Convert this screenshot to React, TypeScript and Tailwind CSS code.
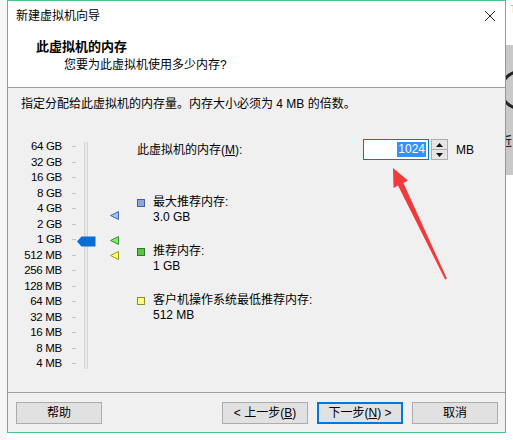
import React from "react";

const labels = [
  "64 GB", "32 GB", "16 GB", "8 GB", "4 GB", "2 GB", "1 GB", "512 MB",
  "256 MB", "128 MB", "64 MB", "32 MB", "16 MB", "8 MB", "4 MB",
];

function Tri({ fill, stroke }: { fill: string; stroke: string }) {
  return (
    <svg width="9" height="9" viewBox="0 0 9 9">
      <path d="M0.5 4.5 L8.5 0.5 L8.5 8.5 Z" fill={fill} stroke={stroke} strokeWidth="1" />
    </svg>
  );
}

function Legend({ color, border, title, value }: { color: string; border: string; title: string; value: string }) {
  return (
    <div className="flex">
      <div className="w-[16px] pt-[4px]">
        <div className="h-[8px] w-[8px] border" style={{ background: color, borderColor: border }} />
      </div>
      <div className="leading-[15px]">
        <div>{title}</div>
        <div>{value}</div>
      </div>
    </div>
  );
}

function Btn({ children, primary }: { children: React.ReactNode; primary?: boolean }) {
  return (
    <button
      className={
        "flex h-[22px] w-[86px] items-center justify-center bg-[#e1e1e1] text-[12px] " +
        (primary ? "border-2 border-[#0078d7]" : "border border-[#adadad]")
      }
    >
      {children}
    </button>
  );
}

export default function App() {
  return (
    <div className="relative flex h-[440px] w-[513px] overflow-hidden bg-white font-['Liberation_Sans','Noto_Sans_CJK_SC',sans-serif] text-[12px] text-black">
      <div className="w-[7px] bg-[#f7f7f7]" />

      {/* Dialog window */}
      <div className="flex h-[433px] w-[499px] flex-col border border-[#4cc08e] bg-white">
        {/* Title bar + header */}
        <div className="h-[86px] bg-white">
          <div className="flex h-[29px] items-center justify-between pl-[8px] pr-[9px]">
            <span className="text-[12px]">新建虚拟机向导</span>
            <svg width="12" height="12" viewBox="0 0 12 12" className="mt-[1px]">
              <path d="M1 1 L11 11 M11 1 L1 11" stroke="#222" strokeWidth="1" />
            </svg>
          </div>
          <div className="pl-[28px] pt-[8px] leading-[18px]">
            <div className="text-[13px] font-bold">此虚拟机的内存</div>
            <div className="pl-[28px] text-[12px]">您要为此虚拟机使用多少内存?</div>
          </div>
        </div>
        <div className="h-px bg-[#a0a0a0]" />

        {/* Body */}
        <div className="flex-1 bg-[#f0f0f0]">
          <div className="pl-[13px] pt-[8px] leading-[16px]">
            指定分配给此虚拟机的内存量。内存大小必须为 4 MB 的倍数。
          </div>

          <div className="relative mt-[27px] flex">
            {/* Slider labels */}
            <div className="w-[54px] text-right text-[11.5px] tracking-[-0.3px]">
              {labels.map((l) => (
                <div key={l} className="flex h-[15.5px] items-center justify-end">
                  {l}
                </div>
              ))}
            </div>
            {/* Ticks */}
            <div className="ml-[10px] w-[4px]">
              {labels.map((l) => (
                <div key={l} className="flex h-[15.5px] items-center">
                  <div className="h-px w-[4px] bg-[#c4c4c4]" />
                </div>
              ))}
            </div>
            {/* Track */}
            <div className="ml-[8px] mt-[3px] flex h-[227px] w-[4px] border-x border-[#d6d6d6] bg-[#e7e7e7]" />

            {/* Thumb at 1 GB */}
            <svg className="absolute left-[69px] top-[97px]" width="19" height="11" viewBox="0 0 19 11">
              <path d="M0 5.5 L4.5 0.5 L18.5 0.5 L18.5 10.5 L4.5 10.5 Z" fill="#0a6fd0" />
            </svg>
            {/* Markers */}
            <div className="absolute left-[102px] top-[72px]">
              <Tri fill="#a4bee6" stroke="#3d68b0" />
            </div>
            <div className="absolute left-[102px] top-[97px]">
              <Tri fill="#8ee070" stroke="#2e9a2e" />
            </div>
            <div className="absolute left-[102px] top-[112px]">
              <Tri fill="#ffff70" stroke="#9a9a20" />
            </div>

            {/* Right column */}
            <div className="ml-[49px] flex flex-col">
              <div className="flex h-[21px] items-center">
                <div className="w-[226px]">
                  此虚拟机的内存(<span className="underline">M</span>):
                </div>
                <div className="flex h-[21px] w-[66px] items-center justify-end border border-[#0078d7] bg-white pr-[2px]">
                  <span className="bg-[#3390ff] px-px leading-[15px] text-white">1024</span>
                </div>
                <div className="ml-[2px] flex h-[21px] w-[17px] flex-col border border-[#adadad] bg-[#e5e5e5]">
                  <div className="flex flex-1 items-center justify-center border-b border-[#adadad]">
                    <svg width="7" height="4" viewBox="0 0 7 4"><path d="M0 4 L3.5 0 L7 4 Z" fill="#111" /></svg>
                  </div>
                  <div className="flex flex-1 items-center justify-center">
                    <svg width="7" height="4" viewBox="0 0 7 4"><path d="M0 0 L3.5 4 L7 0 Z" fill="#111" /></svg>
                  </div>
                </div>
                <span className="ml-[8px]">MB</span>
              </div>

              <div className="mt-[35px] flex flex-col gap-[19px]">
                <Legend color="#8fa6d6" border="#445f94" title="最大推荐内存:" value="3.0 GB" />
                <Legend color="#5cc24a" border="#2b7a25" title="推荐内存:" value="1 GB" />
                <Legend color="#ffff80" border="#8d8d2a" title="客户机操作系统最低推荐内存:" value="512 MB" />
              </div>
            </div>
          </div>
        </div>

        <div className="h-px bg-[#a0a0a0]" />
        {/* Buttons */}
        <div className="flex h-[39px] items-start bg-[#f0f0f0] pl-[8px] pr-[7px] pt-[9px]">
          <Btn>帮助</Btn>
          <div className="flex-1" />
          <div className="flex gap-[9px]">
            <Btn>&lt; 上一步(<span className="underline">B</span>)</Btn>
            <Btn primary>下一步(<span className="underline">N</span>) &gt;</Btn>
            <Btn>取消</Btn>
          </div>
        </div>
      </div>

      {/* Background window peeking through on the right */}
      <div className="flex w-[7px] flex-col">
        <div className="h-[45px] bg-white pl-[4px] pt-[1px] text-[11px] text-[#7fc9b0]">T</div>
        <div className="relative h-[130px] overflow-hidden bg-[#c9c9c9]">
          <div className="absolute left-[-6px] top-[25px] h-[40px] w-[40px] rounded-full border-[3px] border-[#222]" />
          <div className="absolute left-[-6px] top-[88px] text-[12px]">近</div>
        </div>
        <div className="flex-1 bg-white" />
      </div>

      {/* Red annotation arrow */}
      <svg className="pointer-events-none absolute left-0 top-0" width="513" height="440" viewBox="0 0 513 440">
        <polygon
          points="393,168 408,180.5 403.4,182.9 446.9,278.6 445.1,279.4 398,185.5 393.5,188"
          fill="#ef3b3b"
        />
      </svg>
    </div>
  );
}
